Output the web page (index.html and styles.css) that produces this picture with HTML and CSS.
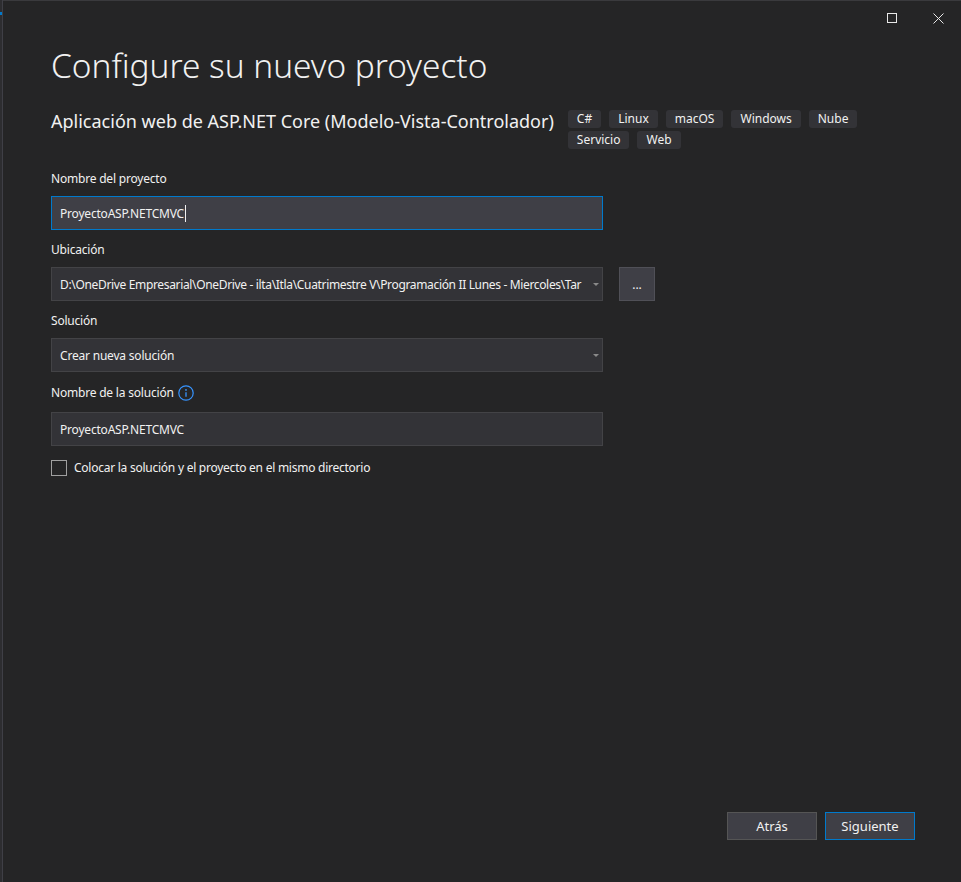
FILE: index.html
```html
<!DOCTYPE html>
<html lang="es">
<head>
<meta charset="utf-8">
<title>Configure su nuevo proyecto</title>
<link rel="stylesheet" href="styles.css">
</head>
<body>
<div class="screen">
  <div class="edge"><span class="edge-mark"></span></div>
  <div class="dialog">
    <div class="titlebar">
      <button class="win-btn" aria-label="Maximizar">
        <svg width="10" height="10" viewBox="0 0 10 10"><rect x="0.5" y="0.5" width="9" height="9" fill="none" stroke="#e8e8e8" stroke-width="1"/></svg>
      </button>
      <button class="win-btn" aria-label="Cerrar">
        <svg width="11" height="11" viewBox="0 0 11 11"><path d="M0.5 0.5 L10.5 10.5 M10.5 0.5 L0.5 10.5" stroke="#e8e8e8" stroke-width="1" fill="none"/></svg>
      </button>
    </div>
    <main class="content">
      <h1 class="title">Configure su nuevo proyecto</h1>
      <div class="template-row">
        <h2 class="template-name">Aplicación web de ASP.NET Core (Modelo-Vista-Controlador)</h2>
        <ul class="tags">
          <li class="tag">C#</li>
          <li class="tag">Linux</li>
          <li class="tag">macOS</li>
          <li class="tag">Windows</li>
          <li class="tag">Nube</li>
          <li class="tag">Servicio</li>
          <li class="tag">Web</li>
        </ul>
      </div>

      <div class="field field-first">
        <div class="field-label">Nombre del proyecto</div>
        <div class="input focused"><span class="caret">ProyectoASP.NETCMVC</span></div>
      </div>

      <div class="field">
        <div class="field-label">Ubicación</div>
        <div class="row">
          <div class="input select">
            <span class="value path">D:\OneDrive Empresarial\OneDrive - ilta\Itla\Cuatrimestre V\Programación II Lunes - Miercoles\Tar</span>
            <span class="arrow"></span>
          </div>
          <button class="browse">...</button>
        </div>
      </div>

      <div class="field">
        <div class="field-label">Solución</div>
        <div class="input select">
          <span class="value">Crear nueva solución</span>
          <span class="arrow"></span>
        </div>
      </div>

      <div class="field field-info">
        <div class="field-label">Nombre de la solución
          <svg class="info" width="16" height="16" viewBox="0 0 16 16"><circle cx="8" cy="8" r="7.2" fill="none" stroke="#3794ff" stroke-width="1.2"/><circle cx="8" cy="4.9" r="0.9" fill="#3794ff"/><path d="M8 7.2 V11.8" stroke="#3794ff" stroke-width="1.3"/></svg>
        </div>
        <div class="input"><span class="value">ProyectoASP.NETCMVC</span></div>
      </div>

      <label class="check">
        <span class="box"></span>
        <span>Colocar la solución y el proyecto en el mismo directorio</span>
      </label>
    </main>
    <footer class="actions">
      <button class="btn">Atrás</button>
      <button class="btn btn-primary">Siguiente</button>
    </footer>
  </div>
</div>
</body>
</html>
```

FILE: styles.css
```css
* { box-sizing: border-box; }
html, body { margin: 0; padding: 0; }
body {
  background: #252526;
  font-family: "Segoe UI", "Noto Sans", "Liberation Sans", sans-serif;
  color: #f1f1f1;
  width: 961px;
  height: 882px;
  overflow: hidden;
}
.screen { display: flex; height: 882px; }
.edge {
  width: 3px;
  flex: none;
  background: #2d2d30;
  border-right: 1px solid #3f3f46;
  position: relative;
}
.edge-mark {
  position: absolute;
  left: 0;
  top: 12px;
  width: 2px;
  height: 3px;
  background: #007acc;
}
.dialog {
  flex: 1;
  display: flex;
  flex-direction: column;
  border-top: 1px solid #3a3a3d;
  background: #252526;
}
.titlebar {
  height: 34px;
  flex: none;
  display: flex;
  justify-content: flex-end;
}
.win-btn {
  width: 46px;
  height: 34px;
  background: none;
  border: 0;
  padding: 0;
  display: flex;
  align-items: center;
  justify-content: center;
}
.content {
  flex: 1;
  padding: 0 48px;
}
.title {
  margin: 10px 0 0;
  font-size: 33.4px;
  line-height: 40px;
  font-weight: 300;
  color: #f1f1f1;
}
.template-row {
  display: flex;
  align-items: flex-start;
  gap: 14px;
  margin-top: 25px;
}
.template-name {
  margin: 0;
  font-size: 18px;
  line-height: 23px;
  font-weight: 400;
  white-space: nowrap;
}
.tags {
  list-style: none;
  margin: 0;
  padding: 0;
  display: flex;
  flex-wrap: wrap;
  gap: 3px 8px;
  width: 300px;
}
.tag {
  height: 18px;
  line-height: 18px;
  padding: 0 9px;
  font-size: 12px;
  background: #333337;
  border-radius: 3px;
  color: #f1f1f1;
}
.field { margin-top: 11px; }
.field-first { margin-top: 21px; }
.field-label {
  display: flex;
  align-items: center;
  gap: 4px;
  font-size: 12px;
  letter-spacing: -0.2px;
  line-height: 18px;
  margin-bottom: 8px;
  color: #f1f1f1;
}
.field-info .field-label { height: 20px; margin-bottom: 9px; margin-top: 1px; }
.input {
  width: 552px;
  height: 34px;
  background: #333337;
  border: 1px solid #434346;
  display: flex;
  align-items: center;
  padding: 0 8px;
  font-size: 12px;
  letter-spacing: -0.2px;
  color: #f1f1f1;
}
.input.focused {
  background: #3f3f46;
  border-color: #007acc;
}
.caret {
  border-right: 1px solid #f1f1f1;
  padding-right: 1px;
  line-height: 17px;
}
.select { justify-content: space-between; padding-right: 3px; }
.value {
  flex: 1;
  white-space: nowrap;
  overflow: hidden;
}
.path { letter-spacing: -0.34px; }
.arrow {
  flex: none;
  width: 0;
  height: 0;
  margin-left: 6px;
  border-left: 3px solid transparent;
  border-right: 3px solid transparent;
  border-top: 3px solid #8a8a8a;
}
.row { display: flex; gap: 16px; }
.browse {
  width: 36px;
  height: 34px;
  background: #3f3f46;
  border: 1px solid #505057;
  color: #f1f1f1;
  font-family: inherit;
  font-size: 12px;
  padding: 0;
}
.info { flex: none; }
.check {
  display: flex;
  align-items: center;
  gap: 7px;
  margin-top: 13px;
  font-size: 12px;
  letter-spacing: -0.25px;
  line-height: 18px;
  color: #f1f1f1;
}
.box {
  width: 16px;
  height: 16px;
  flex: none;
  border: 1px solid #a0a0a0;
}
.actions {
  flex: none;
  display: flex;
  justify-content: flex-end;
  gap: 8px;
  padding: 0 46px 42px 0;
}
.btn {
  width: 90px;
  height: 28px;
  background: #3f3f46;
  border: 1px solid #555555;
  color: #f1f1f1;
  font-family: inherit;
  font-size: 13px;
  padding: 0;
}
.btn-primary { border-color: #007acc; }
```
